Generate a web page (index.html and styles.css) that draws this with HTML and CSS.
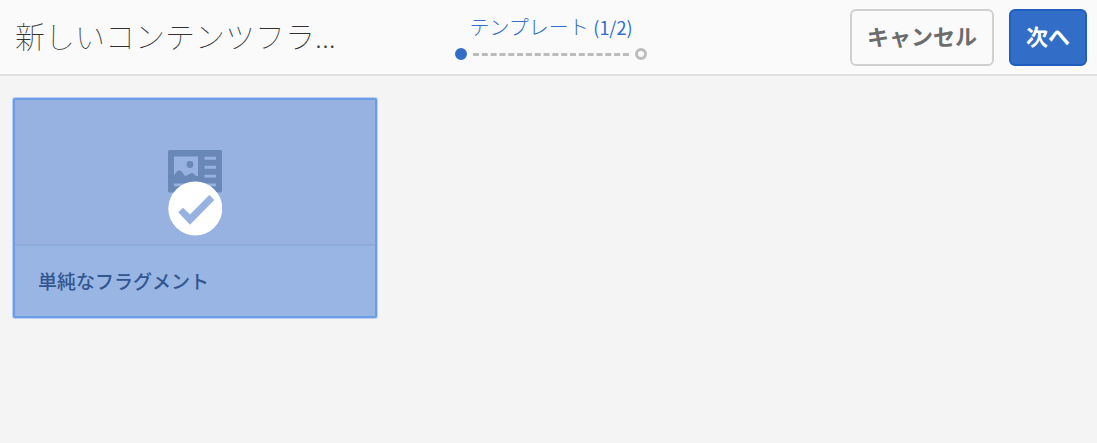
FILE: index.html
```html
<!DOCTYPE html>
<html lang="ja">
<head>
<meta charset="utf-8">
<meta name="viewport" content="width=device-width, initial-scale=1">
<title>新しいコンテンツフラグメント</title>
<link rel="stylesheet" href="styles.css">
</head>
<body>
<header class="wizard-header">
  <h1 class="wizard-title">新しいコンテンツフラ...</h1>
  <div class="wizard-steps">
    <div class="step-label">テンプレート <span class="step-count">(1/2)</span></div>
    <div class="step-track">
      <span class="step-dot step-dot-active"></span>
      <svg class="step-line" height="3" aria-hidden="true"><line x1="0" y1="1.5" x2="100%" y2="1.5" stroke="#bcbcbc" stroke-width="3" stroke-dasharray="6 2.82"/></svg>
      <span class="step-dot"></span>
    </div>
  </div>
  <div class="wizard-actions">
    <button type="button" class="button">キャンセル</button>
    <button type="button" class="button button-primary">次へ</button>
  </div>
</header>
<main class="card-grid">
  <button type="button" class="card" aria-pressed="true">
    <span class="card-preview">
      <svg class="card-icon" viewBox="0 0 54 86" aria-hidden="true">
        <path fill="#6a88b7" fill-rule="evenodd" d="M1.500 0H52.500Q54 0 54 1.500V41Q54 42.500 52.500 42.500H1.500Q0 42.500 0 41V1.500Q0 0 1.500 0ZM6 6.500V25L9 21.500Q12 19 14 22L17 26L20 25Q24 21.500 26 24L28 26H30V6.500ZM36.500 6.700V9.700H48V6.700ZM36.500 15.700V18.700H48V15.700ZM36.500 24.700V27.500H48V24.700ZM6 33.500V36.300H48V33.500Z"/>
        <circle cx="22" cy="14.500" r="3.400" fill="#6a88b7"/>
        <circle cx="27.300" cy="58.500" r="27" fill="#fff"/>
        <path fill="#97b2e1" d="M10.300 62.300L15 57.700L22 64.500L41.300 45L46.300 50L22 74.700Z"/>
      </svg>
    </span>
    <span class="card-title">単純なフラグメント</span>
  </button>
</main>
</body>
</html>
```
FILE: styles.css
```css
* {
  box-sizing: border-box;
}

body {
  margin: 0;
  background: #f4f4f4;
  color: #323232;
  font-family: "Noto Sans CJK JP", sans-serif;
}

button {
  font-family: inherit;
  cursor: pointer;
}

.wizard-header {
  display: grid;
  grid-template-columns: 1fr 192px 1fr;
  align-items: start;
  padding: 9px 10px 8px 15px;
  background: #fafafa;
  border-bottom: 2px solid #dfdfdf;
}

.wizard-title {
  margin: 0;
  white-space: nowrap;
  font-size: 30px;
  font-weight: 100;
  line-height: 52px;
}

.step-label {
  text-align: center;
  color: #326ec8;
  font-size: 20px;
  font-weight: 300;
  line-height: 36px;
}

.step-count {
  font-size: 18px;
  font-weight: 400;
}

.step-track {
  display: flex;
  align-items: center;
  gap: 6px;
  padding-top: 3px;
}

.step-dot {
  flex: none;
  width: 12px;
  height: 12px;
  border: 3px solid #bcbcbc;
  border-radius: 50%;
}

.step-dot-active {
  border-color: #326ec8;
  background: #326ec8;
}

.step-line {
  flex: 1;
  min-width: 0;
}

.wizard-actions {
  display: flex;
  justify-content: flex-end;
  gap: 15px;
}

.button {
  height: 57px;
  padding: 0 15px 6px;
  border: 2px solid #d0d0d0;
  border-radius: 6px;
  background: #fafafa;
  color: #6c6c6c;
  font-size: 22px;
  font-weight: 700;
}

.button-primary {
  border-color: #1f5ebf;
  background: #326ec8;
  color: #fff;
}

.card-grid {
  display: grid;
  grid-template-columns: repeat(auto-fill, 364px);
  gap: 16px;
  padding: 22px 13px;
}

.card {
  display: flex;
  flex-direction: column;
  padding: 0;
  border: 2px solid #6c9be8;
  border-radius: 2px;
  box-shadow: 0 0 0 1px #bad0f2;
  background: #97b2e1;
  text-align: left;
}

.card-preview {
  display: flex;
  justify-content: center;
  padding: 50px 0 8px;
  border-bottom: 2px solid #8eabda;
}

.card-icon {
  width: 54px;
  height: 86px;
}

.card-title {
  padding: 0 23px;
  background: #98b5e4;
  color: #33568f;
  font-size: 19px;
  font-weight: 500;
  line-height: 70px;
}
```
